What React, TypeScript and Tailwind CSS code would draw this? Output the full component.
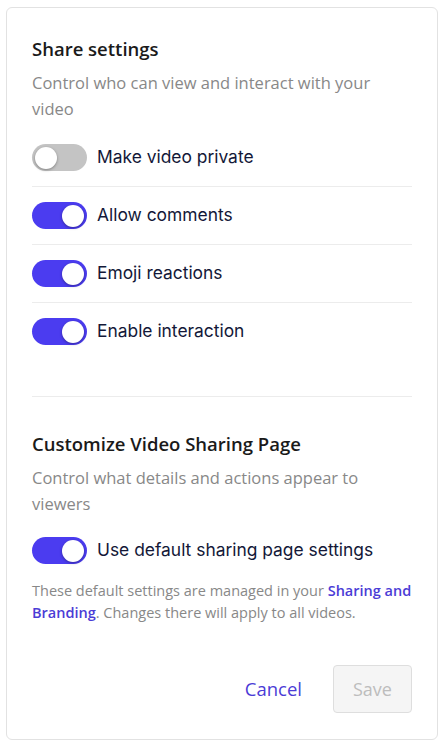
import React, { useState } from "react";

function Toggle({ on, onChange }: { on: boolean; onChange: () => void }) {
  return (
    <button
      onClick={onChange}
      className={`relative h-[27px] w-[55px] shrink-0 rounded-full transition-colors ${
        on ? "bg-[#4b3cf0]" : "bg-[#c4c4c4]"
      }`}
    >
      <span
        className={`absolute top-[2.5px] h-[22px] w-[22px] rounded-full bg-white shadow-[0_1px_3px_rgba(0,0,0,0.35)] transition-all ${
          on ? "left-[30px]" : "left-[3px]"
        }`}
      />
    </button>
  );
}

export default function App() {
  const [settings, setSettings] = useState({
    private: false,
    comments: true,
    emoji: true,
    interaction: true,
  });
  const [useDefault, setUseDefault] = useState(true);

  const rows: { key: keyof typeof settings; label: string }[] = [
    { key: "private", label: "Make video private" },
    { key: "comments", label: "Allow comments" },
    { key: "emoji", label: "Emoji reactions" },
    { key: "interaction", label: "Enable interaction" },
  ];

  return (
    <div className="bg-white px-[6px] pt-[7px] pb-[3px] font-['Open_Sans',sans-serif]">
      <div className="rounded-md border border-[#e2e2e2] px-[25px] pt-[28px] pb-[26px]">
        <h2 className="text-[18.5px] leading-[26px] font-semibold text-[#1a1a1a]">
          Share settings
        </h2>
        <p className="mt-[8px] text-[16.5px] leading-[26px] text-[#888888]">
          Control who can view and interact with your video
        </p>

        <div className="mt-[7px]">
          {rows.map((row, i) => (
            <div
              key={row.key}
              className={`flex items-center gap-[10px] py-[15px] ${
                i < rows.length - 1 ? "border-b border-[#ececec]" : ""
              }`}
            >
              <Toggle
                on={settings[row.key]}
                onChange={() =>
                  setSettings({ ...settings, [row.key]: !settings[row.key] })
                }
              />
              <span className="font-['Inter',sans-serif] text-[17.4px] text-[#131838]">
                {row.label}
              </span>
            </div>
          ))}
        </div>

        <div className="mt-[36px] border-t border-[#ececec] pt-[34px]">
          <h2 className="text-[18.5px] leading-[26px] font-semibold text-[#1a1a1a]">
            Customize Video Sharing Page
          </h2>
          <p className="mt-[8px] text-[16.5px] leading-[26px] text-[#888888]">
            Control what details and actions appear to viewers
          </p>
          <div className="mt-[20px] flex items-center gap-[10px]">
            <Toggle on={useDefault} onChange={() => setUseDefault(!useDefault)} />
            <span className="font-['Inter',sans-serif] text-[17.4px] text-[#131838]">
              Use default sharing page settings
            </span>
          </div>
          <p className="mt-[16px] text-[14.5px] leading-[22px] text-[#888888]">
            These default settings are managed in your{" "}
            <a className="cursor-pointer font-semibold text-[#4b3cd6]">
              Sharing and Branding
            </a>
            . Changes there will apply to all videos.
          </p>
        </div>

        <div className="mt-[41px] flex items-center justify-end gap-[31px]">
          <button className="text-[18.5px] text-[#4b3cd6]">Cancel</button>
          <button
            disabled
            className="h-[48px] w-[79px] rounded-[4px] border border-[#dedede] bg-[#f5f5f5] text-[18px] text-[#bdbdbd]"
          >
            Save
          </button>
        </div>
      </div>
    </div>
  );
}
